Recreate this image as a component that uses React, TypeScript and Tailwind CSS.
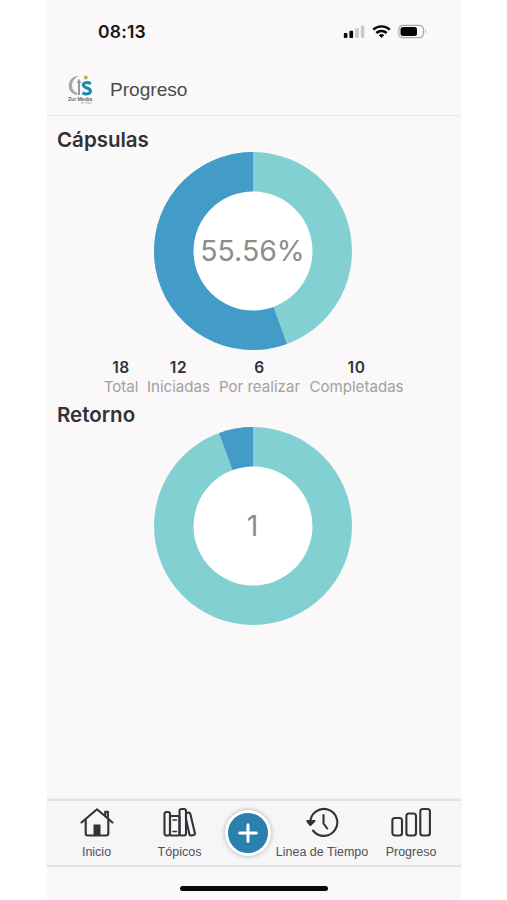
import type { ReactNode } from "react";

const INTER = "font-[Inter,'Liberation_Sans',sans-serif]";
const ARIAL = "font-['Liberation_Sans',Arial,sans-serif]";

function StatusBar() {
  return (
    <div className="flex h-16 items-start justify-between pl-[51px] pr-[34px] pt-[22px]">
      <span className={`${INTER} text-[17.5px] font-semibold leading-5 tracking-[0.2px] text-[#151515]`}>08:13</span>
      <svg width="84" height="18" viewBox="0 0 84 18" className="mt-[1px]">
        <rect x="0.8" y="10" width="3.6" height="5" rx="1" fill="#080808" />
        <rect x="6.4" y="7.7" width="3.7" height="7.3" rx="1" fill="#080808" />
        <rect x="12.2" y="5" width="3.6" height="10" rx="1" fill="#cbcacb" />
        <rect x="17.8" y="2.5" width="3.6" height="12.5" rx="1" fill="#cbcacb" />
        <g fill="none" stroke="#080808" strokeWidth="2.4">
          <path d="M30.2 6.7a12 12 0 0 1 16.6 0" />
          <path d="M33.3 10a7.6 7.6 0 0 1 10.4 0" />
        </g>
        <path d="M35.8 12.2a4 4 0 0 1 5.4 0L38.5 15z" fill="#080808" />
        <rect x="55.8" y="2.3" width="24.6" height="12.4" rx="4" fill="none" stroke="#aaa9aa" strokeWidth="1.2" />
        <rect x="57.5" y="3.9" width="16.5" height="9.2" rx="2.5" fill="#050505" />
        <path d="M82 6.4q2 2 0 4.200z" fill="#aaa9aa" />
      </svg>
    </div>
  );
}

function Logo() {
  return (
    <svg width="26" height="32" viewBox="0 0 26 32">
      <path d="M12 1.700C5 2.300 1.700 6.500 1.800 11.800c.1 5 3.300 8.500 8.300 9.200v-2.200C6.900 17.800 5 15.300 5 11.800c0-4.200 2.400-7.500 7-10.100z" fill="#a5a5a7" />
      <path d="M11 21V8.500L9.400 9.300 12 4.800l2.500 4.500-1.500-.5V21z" fill="#96979a" />
      <circle cx="18.800" cy="3.400" r="2" fill="#b5b44d" />
      <path d="M23.800 9.700c-3-1.700-7.400-1.500-7.400 1.400 0 3.600 7 2.300 7 5.900 0 3.300-4.600 3.600-8 1.900" fill="none" stroke="#168cac" strokeWidth="3" />
      <text x="1" y="26.600" fontSize="5.600" fontWeight="700" textLength="24" lengthAdjust="spacingAndGlyphs" fill="#656568" className={ARIAL}>Zur Media</text>
      <text x="14" y="30.300" fontSize="3.500" textLength="10.500" lengthAdjust="spacingAndGlyphs" fill="#a0a0a2" className={ARIAL}>by Tribal</text>
    </svg>
  );
}

function Donut({ slice, label }: { slice: string; label: string }) {
  return (
    <svg width="198" height="198" viewBox="0 0 198 198" className="block">
      <circle cx="99" cy="99" r="99" fill="#83d0d2" />
      <path d={slice} fill="#439bc7" />
      <circle cx="99" cy="99" r="59.500" fill="#fff" />
      <text x="98.500" y="109.300" textAnchor="middle" fontSize="28.400" fill="#8c8c8c" className={INTER}>{label}</text>
    </svg>
  );
}

function Stat({ value, label, width }: { value: string; label: string; width: string }) {
  return (
    <div className={`flex flex-col items-center ${width}`}>
      <span className="text-[15.5px] font-semibold leading-[19px] tracking-[0.6px] text-[#303236]">{value}</span>
      <span className="whitespace-nowrap text-[15.1px] leading-[19px] text-[#a2a1a3]">{label}</span>
    </div>
  );
}

function Tab({ label, width, children }: { label: string; width: string; children: ReactNode }) {
  return (
    <div className={`flex shrink-0 flex-col items-center pt-[6px] ${width}`}>
      <svg width="42" height="32" viewBox="-4 0 42 32" fill="none" stroke="#303439" strokeWidth="2.1" strokeLinecap="round" strokeLinejoin="round">
        {children}
      </svg>
      <span className={`${ARIAL} mt-[6px] whitespace-nowrap text-[12.5px] leading-[14px] text-[#505154]`}>{label}</span>
    </div>
  );
}

export default function App() {
  return (
    <div className="h-[900px] w-[507px] overflow-hidden bg-white pl-[47px]">
      <div className={`${INTER} flex h-full w-[414px] flex-col bg-[#faf8f9]`}>
        <StatusBar />
        <header className="flex h-[52px] items-center border-b border-[#e9e7e9] pl-[20px]">
          <Logo />
          <h1 className={`${ARIAL} ml-[17px] text-[19.1px] leading-6 text-[#4b4c4e]`}>Progreso</h1>
        </header>

        <main className="flex-1">
          <h2 className="ml-[10px] mt-[11px] h-[25px] text-[20.500px] font-semibold leading-[26px] text-[#303236]">Cápsulas</h2>
          <div className="ml-[106.500px]">
            <Donut slice="M99 99V0A99 99 0 1 0 132.860 192.030Z" label="55.56%" />
          </div>
          <div className="ml-[57px] mt-[8px] flex gap-[9px]">
            <Stat value="18" label="Total" width="w-[34px]" />
            <Stat value="12" label="Iniciadas" width="w-[63px]" />
            <Stat value="6" label="Por realizar" width="w-[81px]" />
            <Stat value="10" label="Completadas" width="w-[95px]" />
          </div>
          <h2 className="ml-[10px] mt-[5px] h-[25.500px] text-[20.500px] font-semibold leading-[27px] text-[#303236]">Retorno</h2>
          <div className="ml-[106.500px]">
            <Donut slice="M99 99V0A99 99 0 0 0 65.140 5.970Z" label="1" />
          </div>
        </main>

        <nav className="flex h-[68px] border-b-2 border-t-2 border-[#e2e1e3] bg-[#f6f6f7] shadow-[0_0_2px_#e8e7e9]">
          <Tab label="Inicio" width="w-[99px]">
            <path d="M1.500 15.500 17 2.300l15.500 13.200" />
            <path d="M5.700 13v13.500q0 2 2 2h18.600q2 0 2-2V13M25.200 8V4.800h2.700v6" />
            <path d="M13.500 28.500v-11h7v11z" fill="#303439" stroke="none" />
          </Tab>
          <Tab label="Tópicos" width="w-[67px]">
            <rect x="1.500" y="5" width="5.500" height="23.500" rx="2" />
            <rect x="7" y="9" width="9.500" height="19.500" rx="1" />
            <rect x="16.500" y="2" width="6.500" height="26.500" rx="2" />
            <path d="M10 13h3.500M10 24.500h3.500" strokeWidth="1.500" />
            <path d="m23 6.200 2.500-.6q1.500-.3 1.800 1.200l4.600 19.400q.3 1.500-1.200 1.800l-2.500.5q-1.500.3-1.800-1.200L23 12z" />
          </Tab>
          <div className="ml-2 flex w-[54px] shrink-0 items-center justify-center">
            <button aria-label="Agregar" className="flex h-[46px] w-[46px] items-center justify-center rounded-full border-[3px] border-white bg-[#2b80ae] shadow-[0_0_5px_rgba(0,0,0,0.3)]">
              <svg width="20" height="20" viewBox="0 0 20 20" stroke="white" strokeWidth="3" strokeLinecap="round"><path d="M10 1.700v16.600M1.700 10h16.600" /></svg>
            </button>
          </div>
          <Tab label="Linea de Tiempo" width="w-[94px]">
            <path d="M5.300 15.500A13.500 13.500 0 1 1 8 23.500" />
            <path d="m2.300 14 3 4 4.200-4z" fill="#303439" />
            <path d="M18.500 8v8.500l3.700 5" />
          </Tab>
          <Tab label="Progreso" width="w-[84px]">
            <rect x="-1.600" y="11" width="9.600" height="17.500" rx="2.500" />
            <rect x="12.400" y="6.500" width="9.600" height="22" rx="2.500" />
            <rect x="26.300" y="2" width="9.600" height="26.500" rx="2.500" />
          </Tab>
        </nav>
        <div className="flex h-[33px] shrink-0 justify-center pt-[19px]">
          <div className="h-[5px] w-[148px] rounded-full bg-[#090909]" />
        </div>
      </div>
    </div>
  );
}
